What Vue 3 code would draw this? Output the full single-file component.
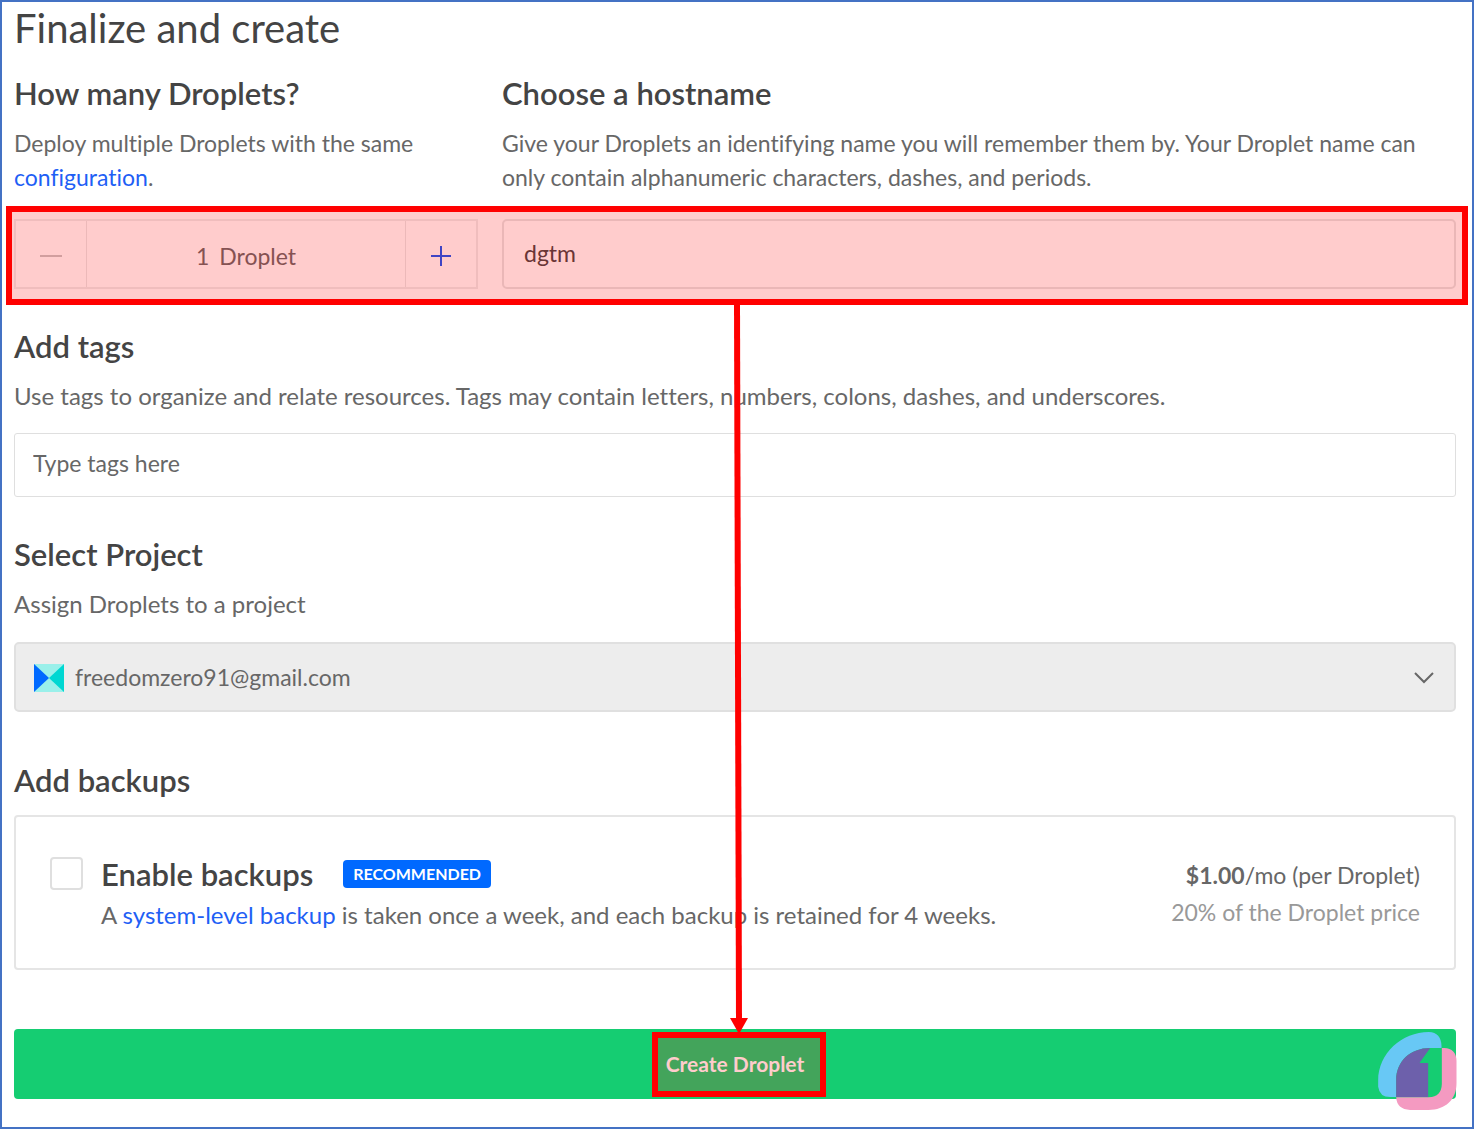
<script setup>
import { ref } from 'vue'

const count = ref(1)
const hostname = ref('dgtm')
const tags = ref('')
const project = ref('freedomzero91@gmail.com')
const backups = ref(false)
</script>

<template>
  <main class="page">
    <h1>Finalize and create</h1>

    <div class="columns">
      <section>
        <h2 id="count-title">How many Droplets?</h2>
        <p>Deploy multiple Droplets with the same <a href="#configuration">configuration</a>.</p>
      </section>
      <section>
        <h2><label for="hostname">Choose a hostname</label></h2>
        <p>Give your Droplets an identifying name you will remember them by. Your Droplet name can only contain alphanumeric characters, dashes, and periods.</p>
      </section>
    </div>

    <div class="columns controls">
      <div class="stepper" role="group" aria-labelledby="count-title">
        <button type="button" class="step" aria-label="Remove a Droplet" :disabled="count <= 1" @click="count--">
          <svg width="22" height="22" viewBox="0 0 22 22"><path d="M0 11h22" /></svg>
        </button>
        <output class="amount"><span>{{ count }}</span><span>Droplet</span></output>
        <button type="button" class="step plus" aria-label="Add a Droplet" @click="count++">
          <svg width="22" height="22" viewBox="0 0 22 22"><path d="M1 11h20M11 1v20" /></svg>
        </button>
      </div>
      <input id="hostname" v-model="hostname" class="field hostname" type="text" />
      <div class="highlight"></div>
    </div>

    <section class="block">
      <h2><label for="tags">Add tags</label></h2>
      <p>Use tags to organize and relate resources. Tags may contain letters, numbers, colons, dashes, and underscores.</p>
      <input id="tags" v-model="tags" class="field tags" type="text" placeholder="Type tags here" />
    </section>

    <section class="block">
      <h2><label for="project">Select Project</label></h2>
      <p>Assign Droplets to a project</p>
      <div class="picker">
        <svg class="project-icon" width="30" height="28" viewBox="0 0 30 28">
          <path fill="#9af0ea" d="M0 0h30v28H0z" />
          <path fill="#0069ff" d="M0 0l15 14L0 28z" />
          <path fill="#00d7d2" d="M30 0L15 14l15 14z" />
        </svg>
        <select id="project" v-model="project">
          <option>freedomzero91@gmail.com</option>
        </select>
        <svg class="chevron" width="20" height="12" viewBox="0 0 20 12"><path d="M1 1l9 9 9-9" /></svg>
      </div>
    </section>

    <section class="block backups">
      <h2>Add backups</h2>
      <div class="card">
        <input id="backups" v-model="backups" type="checkbox" />
        <div class="plan">
          <div class="plan-head">
            <label for="backups">Enable backups</label>
            <span class="badge">RECOMMENDED</span>
          </div>
          <p>A <a href="#backup">system-level backup</a> is taken once a week, and each backup is retained for 4 weeks.</p>
        </div>
        <div class="price">
          <div><strong>$1.00</strong>/mo (per Droplet)</div>
          <div class="share">20% of the Droplet price</div>
        </div>
      </div>
    </section>

    <div class="submit">
      <button type="button" class="create">Create Droplet</button>
      <div class="callout"></div>
      <svg class="arrow" width="20" height="730" viewBox="0 0 20 730">
        <path d="M8 0L10 716" stroke="#f00" stroke-width="6" />
        <path d="M1 714h18l-9 16z" fill="#f00" />
      </svg>
      <svg class="logo" width="79" height="78" viewBox="24 36 236 234">
        <path fill="#68c8f5" d="M24 182C24 100 95 36 176 36Q213 38 214 78V84H180C120 84 78 125 78 180V231H60Q28 231 24 200Z" />
        <path fill="#6d60ab" d="M78 231V180C78 125 120 84 180 84L148 129H174V231Z" />
        <path fill="#f49ac1" d="M215 84H222Q258 86 259 122V190C259 240 225 270 175 270H120Q80 268 78 232H176Q214 230 215 192Z" />
      </svg>
    </div>
  </main>
</template>

<style>
body {
  margin: 0;
  background: #fff;
}
</style>

<style scoped>
* {
  box-sizing: border-box;
}

.page {
  min-height: 100vh;
  padding: 4px 16px 28px 12px;
  border: 2px solid #4472c4;
  color: #676767;
  font: 400 23px/34px Lato, "Open Sans", sans-serif;
  font-variant-ligatures: none;
}

h1,
h2,
p {
  margin: 0;
}

h1 {
  margin-bottom: 25px;
  color: #444;
  font-size: 40px;
  font-weight: 400;
  line-height: 44px;
}

h2 {
  margin-bottom: 15px;
  color: #444;
  font-size: 31px;
  font-weight: 600;
  line-height: 36px;
}

a {
  color: #1f5ff5;
  text-decoration: none;
}

input,
select,
button {
  margin: 0;
  color: inherit;
  font: inherit;
}

.columns {
  display: grid;
  grid-template-columns: minmax(0, 464fr) minmax(0, 954fr);
  column-gap: 24px;
}

.controls {
  position: relative;
  margin-top: 25px;
}

.highlight {
  position: absolute;
  inset: -13px -12px -16px -8px;
  border: 6px solid #f00;
  background: rgba(255, 0, 0, 0.2);
  pointer-events: none;
}

.stepper {
  display: flex;
  height: 70px;
  border: 2px solid #ededed;
}

.step {
  display: flex;
  align-items: center;
  justify-content: center;
  width: 70px;
  padding: 4px 0 0;
  border: 0;
  background: none;
}

.step path {
  fill: none;
  stroke: #c6c6c6;
  stroke-width: 2;
}

.step.plus path {
  stroke: #0f55f5;
}

.amount {
  display: flex;
  flex: 1;
  align-items: center;
  justify-content: center;
  gap: 10px;
  padding-top: 4px;
  border: solid #e8e8e8;
  border-width: 0 1px;
}

.field {
  display: block;
  width: 100%;
  border: 1px solid #dfdfdf;
  border-radius: 3px;
  outline: 0;
  background: #fff;
}

.hostname {
  height: 70px;
  padding: 0 20px 2px;
  border: 2px solid #e5e5e5;
  border-radius: 5px;
  color: #444;
}

.tags {
  height: 64px;
  margin-top: 20px;
  padding: 0 18px 4px;
}

.tags::placeholder {
  color: #676767;
  opacity: 1;
}

.block {
  margin-top: 39px;
}

.block p {
  font-size: 24px;
}

.picker {
  position: relative;
  margin-top: 21px;
}

.picker select {
  display: block;
  width: 100%;
  height: 70px;
  padding: 0 59px;
  border: 2px solid #e0e0e0;
  border-radius: 5px;
  outline: 0;
  background: #ededed;
  appearance: none;
}

.project-icon,
.chevron {
  position: absolute;
  z-index: 1;
  pointer-events: none;
}

.project-icon {
  top: 22px;
  left: 20px;
}

.chevron {
  top: 30px;
  right: 22px;
}

.chevron path {
  fill: none;
  stroke: #676767;
  stroke-width: 2;
}

.backups {
  margin-top: 50px;
}

.card {
  display: flex;
  align-items: flex-start;
  margin-top: 17px;
  padding: 40px 34px 36px;
  border: 2px solid #e5e5e5;
  border-radius: 4px;
}

.card input {
  width: 33px;
  height: 33px;
  margin-right: 18px;
  border: 2px solid #dfdfdf;
  border-radius: 4px;
  background: #fff;
  appearance: none;
}

.plan {
  flex: 1;
  min-width: 0;
}

.plan-head {
  display: flex;
  align-items: center;
  gap: 30px;
  margin-bottom: 7px;
  color: #444;
  font-size: 31px;
  font-weight: 600;
}

.badge {
  padding: 0 10px;
  border-radius: 4px;
  background: #0069ff;
  color: #fff;
  font-size: 16px;
  font-weight: 700;
  line-height: 28px;
}

.price {
  text-align: right;
  line-height: 37px;
}

.share {
  color: #999;
}

.submit {
  position: relative;
  margin-top: 59px;
}

.create {
  display: block;
  width: 100%;
  height: 70px;
  padding: 0;
  border: 0;
  border-radius: 4px;
  background: #15cd72;
  color: #fff;
  font-size: 21px;
  font-weight: 700;
}

.callout {
  position: absolute;
  top: 3px;
  bottom: 2px;
  left: calc(50% - 83px);
  width: 174px;
  border: 6px solid #f00;
  background: rgba(255, 0, 0, 0.2);
  pointer-events: none;
}

.arrow {
  position: absolute;
  bottom: 65px;
  left: calc(50% - 6px);
  pointer-events: none;
}

.logo {
  position: absolute;
  right: -1px;
  bottom: -11px;
}
</style>
